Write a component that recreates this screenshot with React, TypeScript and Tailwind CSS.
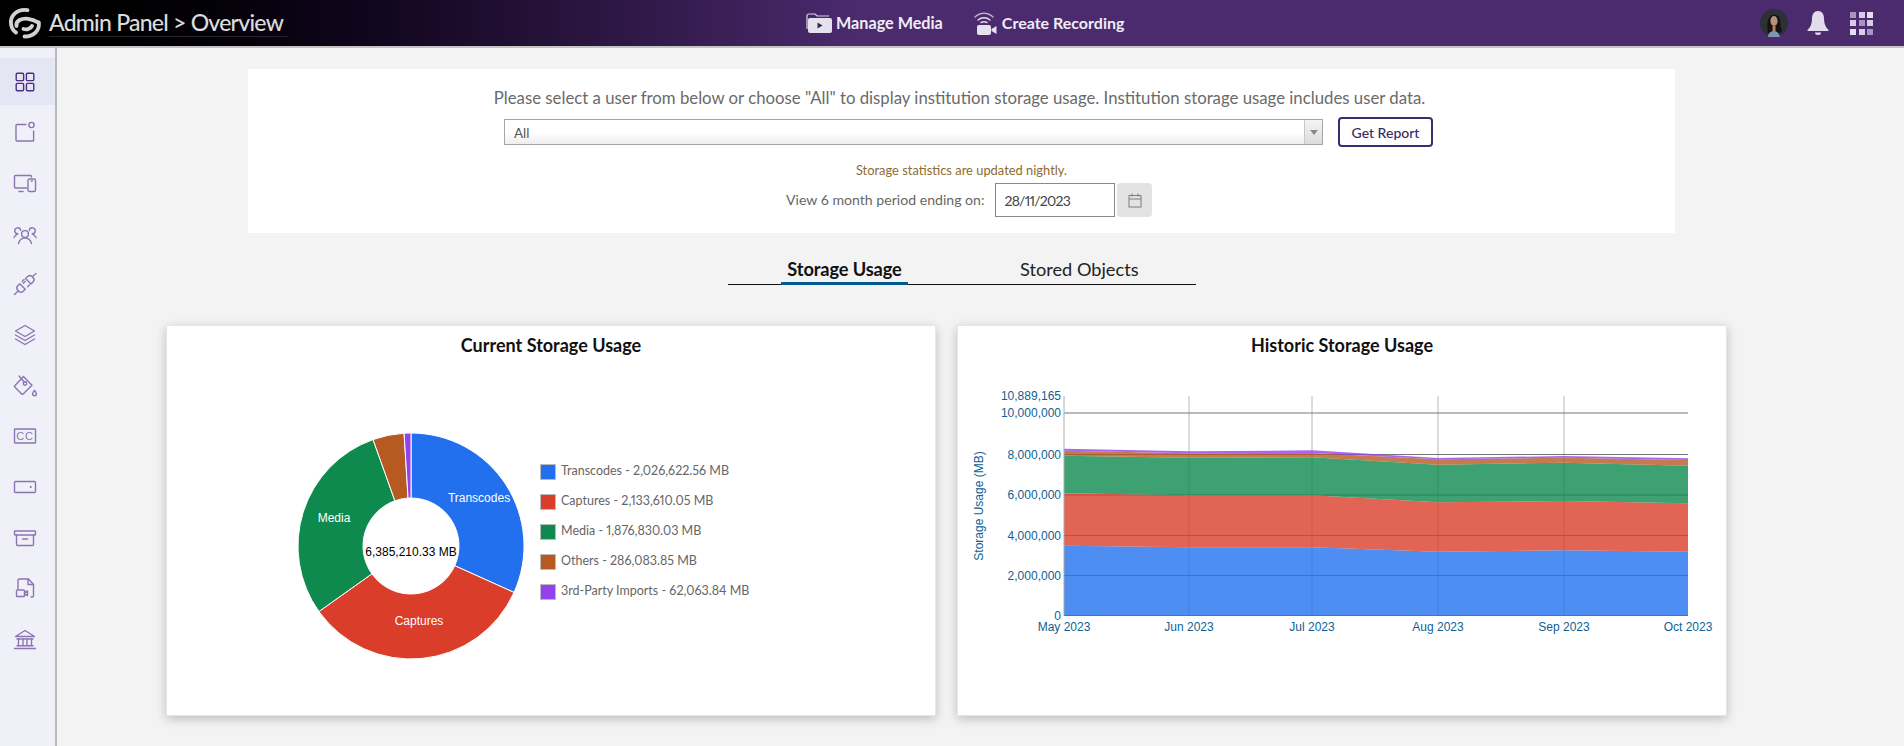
import React from "react";

const sideStroke = "#8a75b2";

function SideIcon({ children, active }: { children: React.ReactNode; active?: boolean }) {
  return (
    <div className={active ? "flex h-[47px] items-center justify-center bg-[#e4e6f4] pr-[5px] mb-[3.700px]" : "flex h-[47px] items-center justify-center pr-[5px] mb-[3.700px]"}>
      <svg
        width="26"
        height="26"
        viewBox="0 0 26 26"
        fill="none"
        stroke={active ? "#4b2f80" : sideStroke}
        strokeWidth="1.4"
        strokeLinecap="round"
        strokeLinejoin="round"
      >
        {children}
      </svg>
    </div>
  );
}

function Sidebar() {
  return (
    <aside className="w-[57px] shrink-0 border-r-2 border-[#b9b9b9] bg-[#f0f1f8] pt-[10px]">
      <SideIcon active>
        <rect x="4.2" y="4.2" width="7.4" height="7.4" rx="1.2" />
        <rect x="14.4" y="4.2" width="7.4" height="7.4" rx="1.2" />
        <rect x="4.2" y="14.4" width="7.4" height="7.4" rx="1.2" />
        <rect x="14.4" y="14.4" width="7.4" height="7.4" rx="1.2" />
      </SideIcon>
      <SideIcon>
        <path d="M14 5.5H5a1 1 0 0 0-1 1V21a1 1 0 0 0 1 1h16a.6.6 0 0 0 .6-.6V12" />
        <circle cx="19.5" cy="6" r="2.6" />
      </SideIcon>
      <SideIcon>
        <path d="M19.5 7V6.500a1 1 0 0 0-1-1H3.500a1 1 0 0 0-1 1V17a1 1 0 0 0 1 1H15" />
        <path d="M7 21.500h4" />
        <rect x="16" y="9" width="7.500" height="12.500" rx="1.500" />
        <path d="M19.300 11h1" />
      </SideIcon>
      <SideIcon>
        <circle cx="13" cy="13" r="3.400" />
        <path d="M6.500 22.500c.8-3.300 3.400-5.400 6.500-5.400s5.700 2.100 6.500 5.400" />
        <path d="M8.700 9.300A3 3 0 1 0 5.800 12.800C4 13.500 2.800 14.800 2 16.500" />
        <path d="M17.300 9.300a3 3 0 1 1 2.900 3.500c1.800.7 3 2 3.800 3.700" />
      </SideIcon>
      <SideIcon>
        <path d="M2.500 23.500 6.500 19.500" />
        <path d="M7.800 12.800l5.400 5.400-2 2a3.200 3.200 0 0 1-4.500 0l-.9-.9a3.200 3.200 0 0 1 0-4.500z" />
        <path d="M10.200 10.400 12 8.600M15.600 15.800l1.800-1.800" />
        <path d="M13.300 10.300 11.300 12.300M13.600 7.500l5.400 5.400 2-2a3.200 3.200 0 0 0 0-4.500l-.9-.9a3.200 3.200 0 0 0-4.500 0z" />
        <path d="M20.500 5.500 24 2.500" />
      </SideIcon>
      <SideIcon>
        <path d="M13 3.500 22.500 9 13 14.500 3.500 9z" />
        <path d="M3.500 13 13 18.500 22.500 13" />
        <path d="M3.500 17 13 22.500 22.500 17" />
      </SideIcon>
      <SideIcon>
        <path d="M11.500 3.500 2.800 12.700a1 1 0 0 0 0 1.400l6.900 6.900a1 1 0 0 0 1.400 0l8.900-8.700z" />
        <path d="M7 3l5.500 6.300" />
        <circle cx="13" cy="10.500" r="1.700" />
        <path d="M22.500 17.500c1.300 1.600 1.900 2.500 1.900 3.300a1.900 1.900 0 0 1-3.800 0c0-.8.600-1.700 1.900-3.300z" />
      </SideIcon>
      <SideIcon>
        <rect x="2.500" y="6" width="21" height="14" rx=".6" />
        <text x="13" y="17" textAnchor="middle" fontSize="11" fontFamily="Liberation Sans, sans-serif" fill={sideStroke} stroke="none" letterSpacing=".8">
          CC
        </text>
      </SideIcon>
      <SideIcon>
        <rect x="2.500" y="7.500" width="21" height="11" rx="1.200" />
        <path d="M18.600 13h.3" strokeWidth="1.800" />
      </SideIcon>
      <SideIcon>
        <rect x="2.500" y="6" width="21" height="4" rx=".6" />
        <path d="M4.500 10v9.500a1 1 0 0 0 1 1h15a1 1 0 0 0 1-1V10" />
        <path d="M10.500 14h5" />
      </SideIcon>
      <SideIcon>
        <path d="M6 14V5a1 1 0 0 1 1-1h9.500l5 5.500V21a1 1 0 0 1-1 1h-1.500" />
        <path d="M16 4v5.500h5.500" />
        <rect x="4.500" y="15" width="8" height="6.500" rx=".8" />
        <path d="M12.500 17.500l3-1.500v4.500l-3-1.500" />
      </SideIcon>
      <SideIcon>
        <path d="M3.500 10.500 13 4.500l9.500 6z" />
        <path d="M5 13h16" />
        <path d="M6.500 13v6.500M11 13v6.500M15 13v6.500M19.500 13v6.500" />
        <path d="M5 19.800h16" />
        <path d="M2.500 22.500h21" />
      </SideIcon>
    </aside>
  );
}

function Header() {
  return (
    <header className="flex h-[48px] shrink-0 items-center border-b-2 border-[#c4c4c4] bg-linear-to-r from-black via-[#4b2a6e] via-45% to-[#4b2a6e]">
      <div className="flex w-[688px] items-center pl-[4px]">
        <svg width="40" height="38" viewBox="0 0 40 38" fill="none" stroke="#d2d2d2" strokeWidth="3.800" strokeLinecap="round">
          <path d="M23.500 6.200C13 4.500 6 12 7 20c.5 4 2.500 7 5 8.500" />
          <path d="M12.500 22C11.500 16.500 18 14 24 14.800c4 .5 7.500 2 10.500 3.800" />
          <path d="M34.800 18.500C36 26 30 32.500 20.500 32.500" />
          <path d="M19.500 25c3.500 1 7-.2 8.500-3" />
        </svg>
        <div className="ml-[5px] border-b border-[#26222e] pb-[1px] pr-[5px] text-[23px] leading-[26px] font-medium tracking-[-0.75px] text-[#dcdcdc] font-['Lato',sans-serif]">
          Admin Panel &gt; Overview
        </div>
      </div>
      <div className="ml-[118px] flex items-center">
        <svg width="26" height="22" viewBox="0 0 26 22">
          <path d="M1 17V4a2 2 0 0 1 2-2h6l2 2h12" fill="none" stroke="#dcd6e6" strokeWidth="1.200" />
          <path d="M2 8a2 2 0 0 1 2-2h20a2 2 0 0 1 2 2v11a2 2 0 0 1-2 2H4a2 2 0 0 1-2-2z" fill="#e6e1ee" />
          <path d="M11.500 10.500v6l5-3z" fill="#3c2358" />
        </svg>
        <span className="ml-[4px] text-[16.200px] font-bold text-[#efedf3] font-['Lato',sans-serif]">Manage Media</span>
      </div>
      <div className="ml-[30px] flex items-center">
        <svg width="24" height="26" viewBox="0 0 24 26" fill="none">
          <path d="M2 7c5-5 13-5 18 0" stroke="#b9aecb" strokeWidth="1.400" strokeLinecap="round" />
          <path d="M5 10c3.500-3 8.500-3 12 0" stroke="#e3deec" strokeWidth="1.400" strokeLinecap="round" />
          <path d="M8 12.500c2-1 4-1 6 0" stroke="#e3deec" strokeWidth="1.400" strokeLinecap="round" />
          <rect x="4" y="15" width="14" height="10" rx="2" fill="#e6e1ee" />
          <path d="M18.500 19l5-3v8l-5-3z" fill="#e6e1ee" />
        </svg>
        <span className="ml-[5px] text-[16px] font-bold text-[#efedf3] font-['Lato',sans-serif]">Create Recording</span>
      </div>
      <div className="ml-auto mr-[31px] flex items-center">
        <svg width="28" height="28" viewBox="0 0 28 28">
          <circle cx="14" cy="14" r="14" fill="#2c3135" />
          <path d="M8 24c-1-6-1-12 1-15 2-4 8-4 10-1 2 3 1 9 3 14l-6 4z" fill="#16110f" />
          <ellipse cx="14" cy="12" rx="3.600" ry="5" fill="#b98f7c" />
          <path d="M8 28c0-4 3-6 6-6s5 2 6 6z" fill="#7f95b5" />
          <path d="M12.500 17h3v6h-3z" fill="#a98270" />
        </svg>
        <svg className="ml-[18px]" width="24" height="24" viewBox="0 0 24 24" fill="#e2dcec">
          <path d="M12 0c4 0 6 3.500 6 7.500 0 5 1.500 9 4.500 11.500v1H1.500v-1C4.500 16.500 6 12.500 6 7.500 6 3.500 8 0 12 0z" />
          <path d="M9 21.500h6a3 2.500 0 0 1-6 0z" />
        </svg>
        <div className="ml-[20px] grid grid-cols-[6px_6px_6px] gap-[2.500px]">
          <div className="h-[6px] bg-[#a794c2]" />
          <div className="h-[6px] bg-[#d6cfe3]" />
          <div className="h-[6px] bg-[#e4dfee]" />
          <div className="h-[6px] bg-[#d6cfe3]" />
          <div className="h-[6px] bg-[#a794c2]" />
          <div className="h-[6px] bg-[#d6cfe3]" />
          <div className="h-[6px] bg-[#e4dfee]" />
          <div className="h-[6px] bg-[#d6cfe3]" />
          <div className="h-[6px] bg-[#a794c2]" />
        </div>
      </div>
    </header>
  );
}

function FilterPanel() {
  return (
    <section className="ml-[191px] mt-[21px] flex h-[164px] w-[1427px] flex-col items-center bg-white font-['Lato',sans-serif]">
      <p className="mt-[18px] pr-[4px] text-[16.780px] leading-[22px] text-[#6a6a6a]">
        Please select a user from below or choose "All" to display institution storage usage. Institution storage usage includes user data.
      </p>
      <div className="mt-[8px] flex items-center self-start pl-[256px]">
        <div className="flex h-[26px] w-[819px] items-center justify-between border border-[#a6a6a6] bg-linear-to-b from-white from-50% to-[#eeeeee] text-[13.500px] text-[#555]">
          <span className="pl-[9px] pt-[2px]">All</span>
          <div className="flex h-full w-[18px] items-center justify-center border-l border-[#c8c8c8] bg-linear-to-b from-[#f4f4f4] to-[#dcdcdc]">
            <div className="h-0 w-0 border-x-[4px] border-t-[5px] border-x-transparent border-t-[#888]" />
          </div>
        </div>
        <button className="ml-[15px] h-[30px] w-[95px] rounded-[4px] border-2 border-[#3f2a6e] bg-white text-[14px] font-medium text-[#3a2a5e]">
          Get Report
        </button>
      </div>
      <p className="mt-[15px] text-[12.900px] leading-[16px] text-[#8f6b2e]">Storage statistics are updated nightly.</p>
      <div className="mt-[5px] flex items-center self-start pl-[538px]">
        <span className="text-[14.100px] text-[#666]">View 6 month period ending on:</span>
        <div className="ml-[11px] flex h-[34px] w-[120px] items-center border border-[#8a8a8a] pl-[8px] text-[14px] tracking-[-0.75px] text-[#444] proportional-nums">28/11/2023</div>
        <div className="ml-[2px] flex h-[34px] w-[35px] items-center justify-center rounded-[4px] bg-[#e3e3e3]">
          <svg width="14" height="15" viewBox="0 0 14 15" fill="none" stroke="#7d7d7d" strokeWidth="1">
            <rect x="1" y="2.500" width="12" height="11.500" />
            <path d="M1 6h12M4 .5v3M10 .5v3" />
          </svg>
        </div>
      </div>
    </section>
  );
}

function Tabs() {
  return (
    <div className="ml-[671px] mt-[25px] flex h-[27px] w-[468px] border-b border-[#111] font-['Lato',sans-serif] text-[18.200px]">
      <div className="ml-[53px] h-[27px] w-[127px] border-b-[3px] border-[#005a8f] text-center font-bold leading-[23px] tracking-[-0.1px] text-[#111]">Storage Usage</div>
      <div className="ml-[112px] leading-[23px] text-[#222]">Stored Objects</div>
    </div>
  );
}

const slices = [
  { name: "Transcodes", value: 2026622.56, label: "2,026,622.56", color: "#2270ee" },
  { name: "Captures", value: 2133610.05, label: "2,133,610.05", color: "#db3d2b" },
  { name: "Media", value: 1876830.03, label: "1,876,830.03", color: "#0e8a4f" },
  { name: "Others", value: 286083.85, label: "286,083.85", color: "#b65a22" },
  { name: "3rd-Party Imports", value: 62063.84, label: "62,063.84", color: "#9440ed" },
];

function Donut() {
  const total = slices.reduce((s, x) => s + x.value, 0);
  const R = 113;
  const r = 48;
  const c = 114;
  let a = 0;
  const pt = (rad: number, ang: number) => `${c + rad * Math.sin(ang)} ${c - rad * Math.cos(ang)}`;
  return (
    <svg width="228" height="228" viewBox="0 0 228 228" className="shrink-0">
      {slices.map((s) => {
        const a0 = a;
        a += (s.value / total) * Math.PI * 2;
        const big = a - a0 > Math.PI ? 1 : 0;
        return (
          <path
            key={s.name}
            d={`M${pt(R, a0)}A${R} ${R} 0 ${big} 1 ${pt(R, a)}L${pt(r, a)}A${r} ${r} 0 ${big} 0 ${pt(r, a0)}Z`}
            fill={s.color}
            stroke="#fff"
            strokeWidth="1"
          />
        );
      })}
      <g fontFamily="Liberation Sans, sans-serif" fontSize="12" textAnchor="middle">
        <text x="182" y="70" fill="#fff">Transcodes</text>
        <text x="122" y="193" fill="#fff">Captures</text>
        <text x="37" y="90" fill="#fff">Media</text>
        <text x="114" y="123.500" fill="#000">6,385,210.33 MB</text>
      </g>
    </svg>
  );
}

function CurrentCard() {
  return (
    <div className="h-[391px] w-[770px] border border-[#e6e6e6] bg-white shadow-[0_3px_10px_rgba(0,0,0,0.22)]">
      <h3 className="mt-[7px] text-center font-['Lato',sans-serif] text-[18px] leading-[24px] font-bold text-[#111]">Current Storage Usage</h3>
      <div className="ml-[130px] mt-[75px] flex items-center">
        <Donut />
        <ul className="mb-[29px] ml-[15px] flex flex-col gap-[13.500px] font-['Lato',sans-serif] text-[12.500px] leading-[16.500px] text-[#666] proportional-nums">
          {slices.map((s) => (
            <li key={s.name} className="flex items-center">
              <span className="h-[16px] w-[16px] border border-[#bbb]" style={{ backgroundColor: s.color }} />
              <span className="ml-[5px]">
                {s.name} - {s.label} MB
              </span>
            </li>
          ))}
        </ul>
      </div>
    </div>
  );
}

const xs = [106, 231, 354, 480, 606, 730];
const stack = [
  { color: "#2270ee", tops: [545.7, 547.3, 547.3, 551.7, 550.3, 551.7] },
  { color: "#db3d2b", tops: [493.3, 495.3, 495.3, 502.3, 501, 503.3] },
  { color: "#0e8a4f", tops: [455.7, 457.7, 457.3, 464.7, 462.7, 465.7] },
  { color: "#b65a22", tops: [450.7, 453.3, 453, 459.3, 457.7, 460] },
  { color: "#9440ed", tops: [448.7, 451.3, 450.3, 458, 456, 458.3] },
];
const yLabels: [string, number][] = [
  ["10,889,165", 396],
  ["10,000,000", 413],
  ["8,000,000", 454.5],
  ["6,000,000", 495],
  ["4,000,000", 535.5],
  ["2,000,000", 575.5],
  ["0", 615.5],
];
const months = ["May 2023", "Jun 2023", "Jul 2023", "Aug 2023", "Sep 2023", "Oct 2023"];

function HistoricChart() {
  const oy = 380;
  return (
    <svg width="768" height="270" viewBox="0 0 768 270" className="mt-[23px] block">
      <g transform={`translate(0 ${-oy})`}>
        {xs.slice(1, 5).map((x) => (
          <line key={x} x1={x} x2={x} y1="396" y2="615.500" stroke="#b8b8b8" />
        ))}
        {yLabels.slice(1, 6).map(([t, y]) => (
          <line key={t} x1="106" x2="730" y1={y} y2={y} stroke="#777" />
        ))}
        {stack.map((s, i) => {
          const top = xs.map((x, j) => `${x},${s.tops[j]}`);
          const below = i === 0 ? [`730,615.5`, `106,615.5`] : xs.map((x, j) => `${x},${stack[i - 1].tops[j]}`).reverse();
          return <polygon key={s.color} points={[...top, ...below].join(" ")} fill={s.color} fillOpacity="0.8" />;
        })}
        <line x1="106" x2="106" y1="396" y2="615.500" stroke="#aaa" />
        <line x1="106" x2="730" y1="615.500" y2="615.500" stroke="#3f73cf" />
        <g fontFamily="Liberation Sans, sans-serif" fontSize="12" fill="#0f5f96">
          {yLabels.map(([t, y]) => (
            <text key={t} x="103" y={y + 4} textAnchor="end">
              {t}
            </text>
          ))}
          {months.map((m, i) => (
            <text key={m} x={xs[i]} y="631" textAnchor="middle">
              {m}
            </text>
          ))}
          <text transform="translate(25 506) rotate(-90)" textAnchor="middle" fontSize="12">
            Storage Usage (MB)
          </text>
        </g>
      </g>
    </svg>
  );
}

function HistoricCard() {
  return (
    <div className="h-[391px] w-[770px] border border-[#e6e6e6] bg-white shadow-[0_3px_10px_rgba(0,0,0,0.22)]">
      <h3 className="mt-[7px] text-center font-['Lato',sans-serif] text-[18px] leading-[24px] font-bold text-[#111]">Historic Storage Usage</h3>
      <HistoricChart />
    </div>
  );
}

export default function App() {
  return (
    <div className="flex h-[746px] flex-col overflow-hidden bg-[#f3f3f3]">
      <Header />
      <div className="flex flex-1">
        <Sidebar />
        <main className="flex-1">
          <FilterPanel />
          <Tabs />
          <div className="ml-[109px] mt-[40px] flex gap-[21px]">
            <CurrentCard />
            <HistoricCard />
          </div>
        </main>
      </div>
    </div>
  );
}
